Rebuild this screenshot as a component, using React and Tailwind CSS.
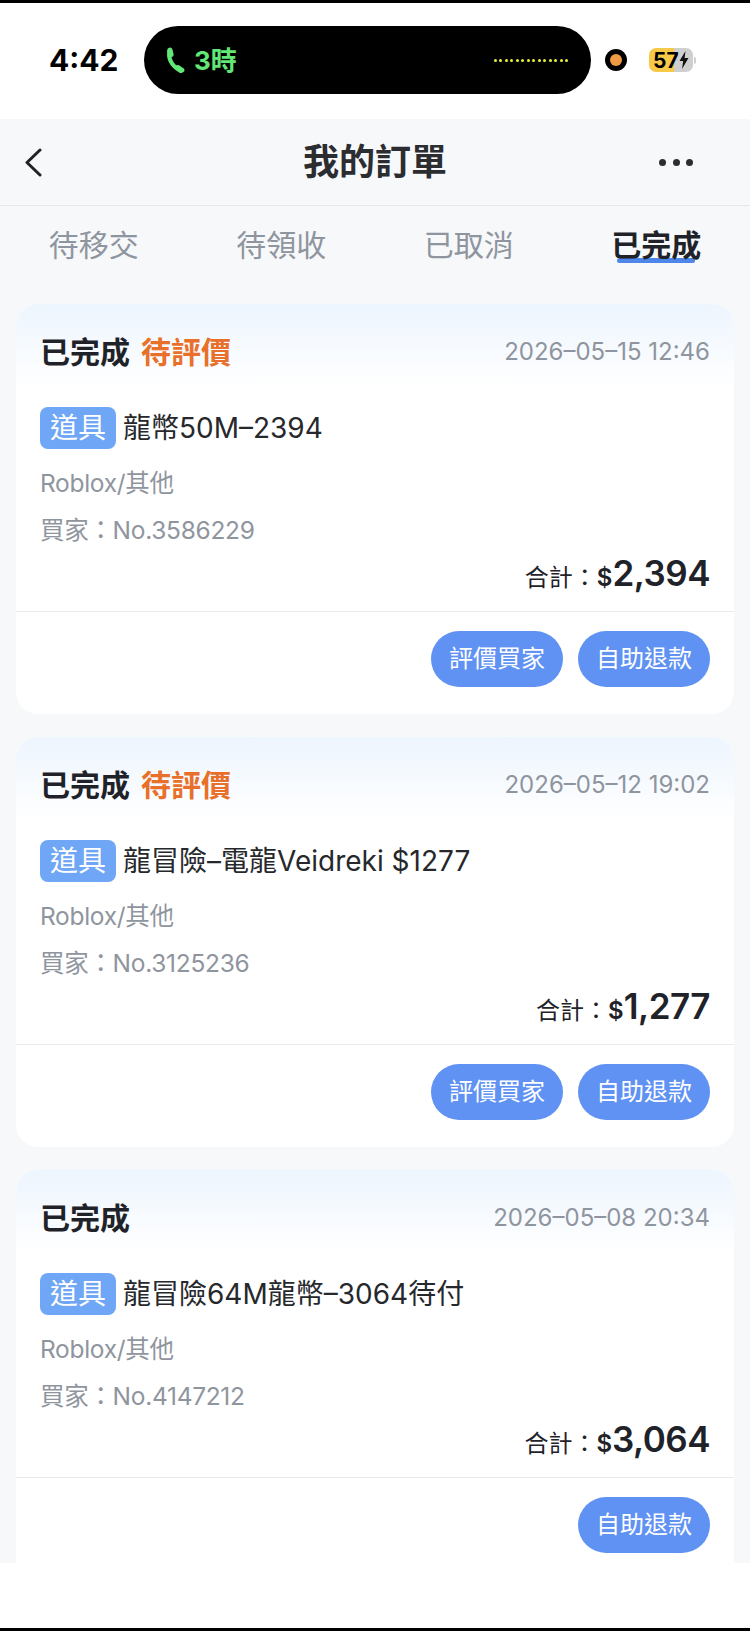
import React from "react";

const orders = [
  {
    review: true,
    date: "2026–05–15 12:46",
    title: "龍幣50M–2394",
    buyer: "No.3586229",
    total: "2,394",
    actions: ["評價買家", "自助退款"],
  },
  {
    review: true,
    date: "2026–05–12 19:02",
    title: "龍冒險–電龍Veidreki $1277",
    buyer: "No.3125236",
    total: "1,277",
    actions: ["評價買家", "自助退款"],
  },
  {
    review: false,
    date: "2026–05–08 20:34",
    title: "龍冒險64M龍幣–3064待付",
    buyer: "No.4147212",
    total: "3,064",
    actions: ["自助退款"],
  },
];

const tabs = ["待移交", "待領收", "已取消", "已完成"];

const PhoneIcon = () => (
  <svg viewBox="0 0 20 27" className="w-[20px] h-[27px]">
    <path d="M5 4 C2.5 10 6 19 15.5 23.5" fill="none" stroke="#62e676" strokeWidth="4.2" strokeLinecap="round" />
    <path d="M2 3.5 Q2.4 0.8 5 0.6 Q7 0.6 7.6 3 L8.6 7.6 Q8.8 9.4 7 10 L3 10.4 Z" fill="#62e676" />
    <path d="M11 18.6 Q12.4 17.4 14 18.2 L18.4 21.2 Q20.2 22.8 19 24.6 Q17.4 26.6 14.6 25.8 L10.4 22.4 Z" fill="#62e676" />
  </svg>
);

const StatusBar = () => (
  <div className="h-[116px] shrink-0 bg-white flex items-start pt-[23px]">
    <div className="w-[144px] pl-[49px] h-[68px] flex items-center">
      <span className="text-[30px] font-bold text-black">4:42</span>
    </div>
    <div className="w-[447px] h-[68px] rounded-[34px] bg-black flex items-center pl-[21px] pr-[23px]">
      <PhoneIcon />
      <span className="ml-[9px] text-[26px] font-bold text-[#62e676]">3時</span>
      <div className="ml-auto flex gap-[2.5px]">
        {Array.from({ length: 14 }).map((_, i) => (
          <span key={i} className="w-[3px] h-[3px] rounded-full bg-[#e8f23c]" />
        ))}
      </div>
    </div>
    <div className="h-[68px] flex items-center ml-[14px]">
      <span className="w-[22px] h-[22px] rounded-full bg-black flex items-center justify-center">
        <span className="w-[12px] h-[12px] rounded-full bg-[#f09a45]" />
      </span>
    </div>
    <div className="h-[68px] flex items-center ml-[22px]">
      <div className="w-[44px] h-[24px] rounded-[7px] bg-[linear-gradient(90deg,#f7c948_57%,#cfcfcf_57%)] flex items-center pl-[4px]">
        <span className="text-[21px] leading-none font-bold text-black">57</span>
        <svg viewBox="0 0 10 18" className="w-[10px] h-[18px]">
          <path d="M6.5 0 L0.5 10 H4.2 L3 18 L9.5 7 H5.6 Z" fill="#111" />
        </svg>
      </div>
      <span className="w-[2px] h-[7px] ml-[1px] rounded-r-full bg-[#cfcfcf]" />
    </div>
  </div>
);

const Header = () => (
  <div className="h-[87px] shrink-0 grid grid-cols-3 items-center border-b border-[#e6e8eb] px-[26px]">
    <svg viewBox="0 0 18 29" className="w-[18px] h-[29px] ml-[-2px]">
      <path d="M16 2 L3 14.5 L16 27" fill="none" stroke="#222" strokeWidth="3" strokeLinecap="round" strokeLinejoin="round" />
    </svg>
    <h1 className="justify-self-center whitespace-nowrap text-[36px] font-semibold text-[#2b2d31] leading-none">我的訂單</h1>
    <div className="justify-self-end mr-[31px] flex gap-[6.5px]">
      <span className="w-[7px] h-[7px] rounded-full bg-[#2b2d31]" />
      <span className="w-[7px] h-[7px] rounded-full bg-[#2b2d31]" />
      <span className="w-[7px] h-[7px] rounded-full bg-[#2b2d31]" />
    </div>
  </div>
);

const Tabs = () => (
  <div className="grid grid-cols-4 h-[76px] shrink-0 pt-[2px]">
    {tabs.map((t) => (
      <div key={t} className="flex items-center justify-center">
        <div className="relative">
          {t === "已完成" && (
            <span className="absolute left-[6px] right-[6px] top-[33px] h-[5px] rounded-full bg-[#4f86ea]" />
          )}
          <span
            className={
              t === "已完成"
                ? "relative text-[30px] leading-[40px] font-semibold text-[#1f2329]"
                : "relative text-[30px] leading-[40px] text-[#8f959e]"
            }
          >
            {t}
          </span>
        </div>
      </div>
    ))}
  </div>
);

const OrderCard = ({ order }) => (
  <div className="mx-4 w-[718px] h-[410px] shrink-0 rounded-[22px] bg-white flex flex-col overflow-hidden">
    <div className="h-[96px] shrink-0 px-6 flex items-center justify-between bg-[linear-gradient(180deg,#edf5fe_0%,#ffffff_86%)]">
      <div className="flex items-center gap-[11px] text-[30px] font-semibold leading-none">
        <span className="text-[#1f2329]">已完成</span>
        {order.review && <span className="text-[#e8702a]">待評價</span>}
      </div>
      <span className="text-[24px] text-[#8f959e] leading-none">{order.date}</span>
    </div>
    <div className="px-6 pt-[7px] flex-1 flex flex-col">
      <div className="flex items-center h-[42px]">
        <span className="w-[76px] h-[42px] rounded-[8px] bg-[#6fa6f5] text-white text-[28px] leading-[42px] text-center">
          道具
        </span>
        <span className="ml-[7px] text-[28px] text-[#26282c]">{order.title}</span>
      </div>
      <div className="mt-[17px] h-[34px] text-[24.5px] tracking-[-0.3px] leading-[34px] text-[#8f959e]">Roblox/其他</div>
      <div className="mt-[13px] h-[34px] text-[24.5px] tracking-[-0.3px] leading-[34px] text-[#8f959e]">買家：{order.buyer}</div>
      <div className="mt-[4px] h-[44px] flex items-baseline justify-end text-[#1f2329]">
        <span className="text-[24px]">合計：</span>
        <span className="text-[24px] font-semibold">$</span>
        <span className="text-[35px] font-semibold tracking-[-0.5px] leading-[44px]">{order.total}</span>
      </div>
    </div>
    <div className="h-[1px] shrink-0 bg-[#e9ebee]" />
    <div className="h-[102px] shrink-0 pt-[19px] px-6 flex justify-end gap-[15px]">
      {order.actions.map((a) => (
        <button key={a} className="w-[132px] h-[56px] rounded-full bg-[#5f92f3] text-white text-[24px]">
          {a}
        </button>
      ))}
    </div>
  </div>
);

export default function App() {
  return (
    <div className="w-[750px] h-[1631px] flex flex-col overflow-hidden bg-white border-t-[3px] border-b-[3px] border-black font-['Inter','Noto_Sans_CJK_TC',sans-serif]">
      <StatusBar />
      <div className="h-[1444px] shrink-0 bg-[#f6f8fa] flex flex-col overflow-hidden">
        <Header />
        <Tabs />
        <div className="pt-[22px] flex flex-col gap-[23px]">
          {orders.map((o) => (
            <OrderCard key={o.date} order={o} />
          ))}
        </div>
      </div>
    </div>
  );
}
